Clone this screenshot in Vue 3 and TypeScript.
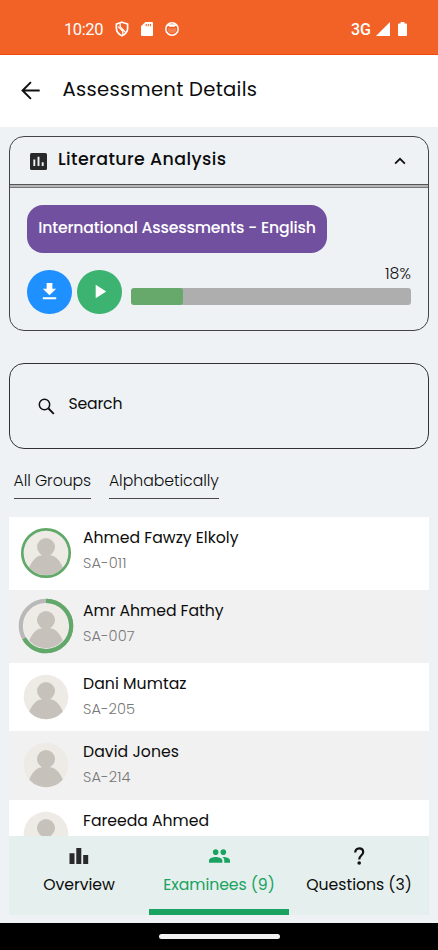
<script setup lang="ts">
import { ref } from 'vue'
import type { Directive } from 'vue'

interface Examinee {
  name: string
  code?: string
  nameWidth: number
  codeWidth?: number
  ring: 'none' | 'full' | 'partial'
}

const progress = ref(18.4)

const examinees = ref<Examinee[]>([
  { name: 'Ahmed Fawzy Elkoly', code: 'SA-011', nameWidth: 155.5, codeWidth: 43.5, ring: 'full' },
  { name: 'Amr Ahmed Fathy', code: 'SA-007', nameWidth: 140.5, codeWidth: 51.5, ring: 'partial' },
  { name: 'Dani Mumtaz', code: 'SA-205', nameWidth: 103.5, codeWidth: 52, ring: 'none' },
  { name: 'David Jones', code: 'SA-214', nameWidth: 96, codeWidth: 47.5, ring: 'none' },
  { name: 'Fareeda Ahmed', nameWidth: 126, ring: 'none' },
])

// Tracks a label's letters so that it spans the given width in pixels.
const vFit: Directive<HTMLElement, number | undefined> = {
  mounted(el, binding) {
    const width = el.getBoundingClientRect().width
    const count = (el.textContent ?? '').length
    if (count > 1 && binding.value) el.style.letterSpacing = `${(binding.value - width) / (count - 1)}px`
  },
}
</script>

<template>
  <div class="screen">
    <div class="status">
      <span v-fit="39.5" class="clock">10:20</span>
      <svg class="s-shield" viewBox="0 0 14 16">
        <path d="M7 1.2 12.6 3v4.6c0 3.2-2.2 5.6-5.6 7.2-3.4-1.6-5.6-4-5.6-7.2V3z" fill="none" stroke="#fff" stroke-width="1.7" />
        <path d="M5.2 2.5V5.6L10.8 11.6M3.2 5.6 7.8 10.2V13.8" fill="none" stroke="#fff" stroke-width="1.3" />
      </svg>
      <svg class="s-sd" viewBox="0 0 12 14">
        <path d="M4.3 0H11a1 1 0 0 1 1 1v12a1 1 0 0 1-1 1H1a1 1 0 0 1-1-1V4.3z" fill="#fff" />
        <path d="M5.2 2v2.2M7.3 2v2.2M9.4 2v2.2" stroke="#f26126" stroke-width="1.1" />
      </svg>
      <svg class="s-cat" viewBox="0 0 14 14">
        <circle cx="7" cy="7" r="6.2" fill="none" stroke="#fff" stroke-width="1.5" />
        <path d="M1.8 4.2 3 2.3h8l1.2 1.9L10.6 3.8 9.5 4.8h-5L3.4 3.8z" fill="#fff" />
        <path d="M3 5.8l1.5.7h5L11 5.8v3.4L9.3 11H4.7L3 9.2z" fill="#fff" opacity=".2" />
      </svg>
      <span class="spacer"></span>
      <span v-fit="20" class="network">3G</span>
      <svg class="s-signal" viewBox="0 0 14 14"><path d="M14 0v14H0z" fill="#fff" /></svg>
      <svg class="s-battery" viewBox="0 0 9 14"><path d="M2.6 0h3.8v1.4H8a1 1 0 0 1 1 1V13a1 1 0 0 1-1 1H1a1 1 0 0 1-1-1V2.4a1 1 0 0 1 1-1h1.6z" fill="#fff" /></svg>
    </div>

    <header class="topbar">
      <svg class="back" viewBox="0 0 18 18"><path d="M17.7 9H1.6M9.4 1.1 1.5 9l7.9 7.9" fill="none" stroke="#111" stroke-width="1.9" /></svg>
      <h1><span v-fit="194.5">Assessment Details</span></h1>
    </header>

    <main class="content">
      <section class="card">
        <div class="card-head">
          <svg class="poll" viewBox="0 0 17 17">
            <rect width="17" height="17" rx="1.5" fill="#292929" />
            <path d="M4.3 6.5V13M8.5 3.7V13M12.7 9.2V13" stroke="#eef2f5" stroke-width="1.9" />
          </svg>
          <h2><span v-fit="168">Literature Analysis</span></h2>
          <span class="spacer"></span>
          <svg class="chevron" viewBox="0 0 12 8"><path d="M1.1 6.7 6 1.8l4.9 4.9" fill="none" stroke="#111" stroke-width="1.8" /></svg>
        </div>
        <div class="card-body">
          <button class="tag"><span v-fit="277.5">International Assessments - English</span></button>
          <div class="controls">
            <button class="round blue">
              <svg viewBox="0 0 24 24"><path d="M19 9h-4V3H9v6H5l7 7zM5 18v2h14v-2z" fill="#fff" /></svg>
            </button>
            <button class="round green">
              <svg viewBox="0 0 24 24"><path d="M8 5v14l11-7z" fill="#fff" /></svg>
            </button>
            <div class="progress">
              <div class="percent"><span v-fit="26">18%</span></div>
              <div class="track"><div class="bar" :style="{ width: progress + '%' }"></div></div>
            </div>
          </div>
        </div>
      </section>

      <label class="search">
        <svg viewBox="0 0 17 17">
          <circle cx="6.5" cy="6.5" r="5.2" fill="none" stroke="#111" stroke-width="1.5" />
          <path d="m10.5 10.5 5.3 5.3" stroke="#111" stroke-width="1.9" />
        </svg>
        <span v-fit="54">Search</span>
      </label>

      <div class="filters">
        <button><span v-fit="77.5">All Groups</span></button>
        <button><span v-fit="110">Alphabetically</span></button>
      </div>

      <ul class="list">
        <li v-for="p in examinees" :key="p.name" :class="{ ringed: p.ring !== 'none' }">
          <svg class="avatar" viewBox="-28 -28 56 56">
            <clipPath id="face"><circle r="22.3" /></clipPath>
            <circle r="22.3" fill="#eeebe6" />
            <g clip-path="url(#face)" fill="#c6c2bb">
              <circle cy="-6" r="9" />
              <path d="M-19 24C-18 12-11 3.5-6 2.5H6C11 3.5 18 12 19 24z" />
              <path d="M-4.5 1h9v4h-9z" />
            </g>
            <circle v-if="p.ring === 'full'" r="23.7" fill="none" stroke="#61a869" stroke-width="2.7" />
            <template v-if="p.ring === 'partial'">
              <circle r="25.2" fill="none" stroke="#b9b9b9" stroke-width="4.2" />
              <circle r="25.2" fill="none" stroke="#61a869" stroke-width="4.2" pathLength="360" stroke-dasharray="240 120" transform="rotate(-90)" />
            </template>
          </svg>
          <div class="who">
            <div class="name"><span v-fit="p.nameWidth">{{ p.name }}</span></div>
            <div v-if="p.code" class="code"><span v-fit="p.codeWidth">{{ p.code }}</span></div>
          </div>
        </li>
      </ul>

      <nav class="tabs">
        <a class="tab">
          <svg viewBox="0 0 20 18"><path d="M.5 6.3h5V17h-5zM7.3 1h5v16h-5zM14.2 8h5v9h-5z" fill="#292929" /></svg>
          <span v-fit="71.5">Overview</span>
        </a>
        <a class="tab active">
          <svg class="people" viewBox="1 4 22 16"><path d="M16 11c1.66 0 2.99-1.34 2.99-3S17.66 5 16 5s-3 1.34-3 3 1.34 3 3 3zm-8 0c1.66 0 2.99-1.34 2.99-3S9.66 5 8 5 5 6.34 5 8s1.34 3 3 3zm0 2c-2.33 0-7 1.17-7 3.5V19h14v-2.5c0-2.33-4.67-3.5-7-3.5zm8 0c-.29 0-.62.02-.97.05 1.16.84 1.97 1.97 1.97 3.45V19h6v-2.5c0-2.33-4.67-3.5-7-3.5z" fill="#1aa260" /></svg>
          <span v-fit="111.5">Examinees (9)</span>
        </a>
        <a class="tab">
          <svg viewBox="0 0 20 18">
            <path d="M6.2 5.4C6.2 3.1 7.9 1.3 10.2 1.3s4 1.6 4 3.9c0 2.9-4 3.3-4 7.2" fill="none" stroke="#111" stroke-width="2.2" />
            <circle cx="10.2" cy="16" r="1.8" fill="#111" />
          </svg>
          <span v-fit="105.5">Questions (3)</span>
        </a>
      </nav>
    </main>

    <div class="system"><span class="pill"></span></div>
  </div>
</template>

<style>
body {
  background: #eef2f5;
  overflow: hidden;
}
</style>

<style scoped>
* {
  box-sizing: border-box;
}
.screen {
  height: 950px;
  overflow: hidden;
  display: flex;
  flex-direction: column;
  background: #eef2f5;
  color: #0c0c0c;
  font-family: Poppins, Inter, sans-serif;
  font-size: 15.7px;
}
svg {
  display: block;
  flex: none;
}
button {
  font: inherit;
  color: inherit;
  border: 0;
  padding: 0;
  background: none;
}
h1,
h2 {
  margin: 0;
}
span {
  white-space: nowrap;
}
.spacer {
  flex: 1;
}
.status {
  flex: none;
  height: 55px;
  padding: 4px 31px 0 64px;
  display: flex;
  align-items: center;
  background: #f26126;
  border-bottom: 1px solid #f04a10;
  color: #fff;
  font-family: Roboto, sans-serif;
  font-size: 16.5px;
}
.s-shield {
  width: 14px;
  height: 16px;
  margin-left: 12px;
}
.s-sd {
  width: 12px;
  height: 14px;
  margin-left: 12px;
}
.s-cat {
  width: 14px;
  height: 14px;
  margin-left: 12px;
}
.network {
  font-size: 16px;
  font-weight: 500;
}
.s-signal {
  width: 14px;
  height: 14px;
  margin-left: 5px;
}
.s-battery {
  width: 9px;
  height: 14px;
  margin-left: 8px;
}
.topbar {
  flex: none;
  height: 72px;
  padding: 0 0 3px 21px;
  display: flex;
  align-items: center;
  background: #fff;
}
.back {
  width: 19px;
  height: 19px;
  margin-top: 1px;
}
h1 {
  margin: -2px 0 0 22.5px;
  font-size: 19.6px;
  font-weight: 400;
}
.content {
  flex: none;
  height: 796px;
  padding: 9px 9px 0;
  display: flex;
  flex-direction: column;
}
.card {
  height: 195px;
  flex: none;
  border: 1px solid #444;
  border-radius: 15px;
}
.card-head {
  height: 48px;
  padding: 0 22px 2px 20px;
  display: flex;
  align-items: center;
  border-bottom: 1px solid #555;
}
.poll {
  width: 17px;
  height: 17px;
  margin-top: 3px;
}
h2 {
  margin: -1px 0 0 11px;
  font-size: 17.4px;
  font-weight: 500;
}
.chevron {
  width: 12px;
  height: 8px;
  margin-top: 3px;
}
.card-body {
  padding: 16.5px 17px 0;
  border-top: 1px solid #777;
  box-shadow: 0 -2px 0 #b4b6b8;
  margin-top: 2px;
}
.tag {
  display: block;
  width: 300px;
  height: 48px;
  padding-bottom: 2px;
  border-radius: 16px;
  background: #7150a0;
  color: #fff;
  font-weight: 500;
}
.controls {
  display: flex;
  margin-top: 9px;
}
.round {
  width: 44.5px;
  height: 44.5px;
  margin: 8px 5.5px 0 0;
  border-radius: 50%;
  display: flex;
  align-items: center;
  justify-content: center;
}
.round svg {
  width: 23px;
  height: 23px;
}
.blue {
  background: #1e90ff;
}
.green {
  background: #3cb371;
}
.progress {
  flex: 1;
  margin-left: 4px;
}
.percent {
  height: 26.5px;
  line-height: 24px;
  text-align: right;
  font-weight: 300;
}
.track {
  height: 17px;
  border-radius: 3px;
  overflow: hidden;
  background: #aeaeae;
}
.bar {
  height: 17px;
  border-radius: 3px;
  background: #67a96b;
}
.search {
  flex: none;
  height: 86px;
  margin-top: 32px;
  padding: 0 0 5px 28px;
  display: flex;
  align-items: center;
  border: 1px solid #333;
  border-radius: 15px;
}
.search svg {
  width: 17px;
  height: 17px;
  margin: 5px 13.5px 0 0;
}
.filters {
  display: flex;
  gap: 18px;
  margin: 17px 0 18px 4.5px;
}
.filters button {
  height: 33px;
  padding-bottom: 4px;
  border-bottom: 1px solid #4a4550;
  font-weight: 300;
}
.list {
  height: 319px;
  flex: none;
  margin: 0;
  padding: 0;
  overflow: hidden;
  list-style: none;
}
.list li {
  height: 68.5px;
  padding: 0 9px;
  display: flex;
  align-items: center;
  background: #fff;
}
.list li.ringed {
  height: 72.75px;
}
.list li:nth-child(even) {
  background: #f1f1f1;
}
.avatar {
  width: 56px;
  height: 56px;
}
.who {
  align-self: flex-start;
  margin-left: 9px;
  padding-top: 8px;
}
.name,
.code {
  height: 25px;
  line-height: 25px;
}
.code {
  padding-top: 1px;
  font-size: 14.6px;
  font-weight: 300;
  color: #777;
}
.tabs {
  flex: none;
  height: 79px;
  display: flex;
  background: #e5efed;
}
.tab {
  flex: 1;
  height: 79px;
  padding-top: 11px;
  display: flex;
  flex-direction: column;
  align-items: center;
  border-bottom: 6px solid transparent;
}
.tab svg {
  width: 20px;
  height: 18px;
}
.tab .people {
  width: 21px;
}
.tab span {
  margin-top: 8px;
}
.tab.active {
  color: #1aa260;
  border-bottom-color: #1aa260;
}
.system {
  flex: none;
  height: 27px;
  display: flex;
  justify-content: center;
  align-items: center;
  background: #000;
}
.pill {
  width: 121px;
  height: 5px;
  border-radius: 3px;
  background: #f2f2f2;
}
</style>
